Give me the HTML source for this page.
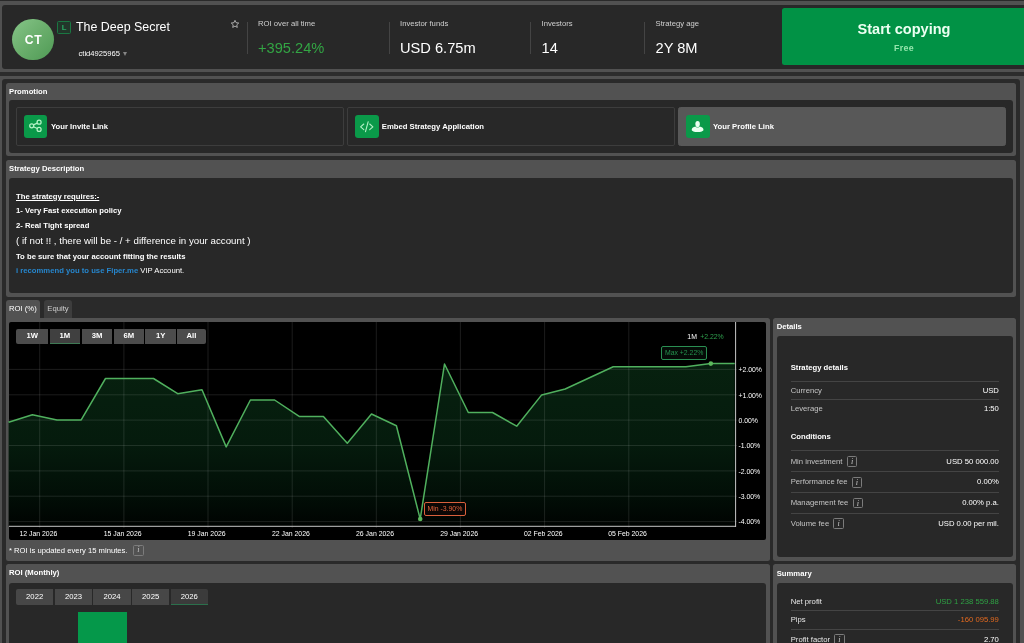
<!DOCTYPE html>
<html lang="en">
<head>
<meta charset="utf-8">
<title>The Deep Secret</title>
<style>
*{box-sizing:border-box;margin:0;padding:0}
html,body{width:1024px;height:643px;overflow:hidden}
body{background:#515151;font-family:"Liberation Sans",Arial,sans-serif;color:#fff;font-size:7.68px;position:relative}
#root{position:absolute;left:0;top:0;width:1024px;height:643px;overflow:hidden;will-change:transform}
.abs{position:absolute}
.topstrip{left:0;top:0;width:1024px;height:1.2px;background:#2a2a2a}
.hdr{left:2.3px;top:5px;width:1030px;height:63.6px;background:#282828;border-radius:3px}
.band{left:0;top:71.7px;width:1024px;height:3.9px;background:#2c2c2c}
.wrap{left:2.3px;top:79px;width:1017.9px;height:600px;background:#2a2a2a;border-radius:3px}
.panel{background:#525252;border-radius:2.5px}
.pbody{background:#282828;border-radius:3px}
.ptitle{font-weight:bold;font-size:7.7px;line-height:10px;white-space:nowrap}
.t{white-space:nowrap;line-height:1}
.sep{height:1px;background:#444}
.card{border:1px solid #3d3d3d;border-radius:2px;height:38.5px;top:107.2px}
.ico{width:23.7px;height:23.8px;border-radius:3px;background:#0a9949;top:114.5px}
.ctext{font-weight:bold;font-size:7.7px;top:122.3px;line-height:9px;white-space:nowrap}
.pbtn{top:329px;height:14.7px;background:#4c4c4c;font-weight:bold;font-size:7.7px;text-align:center;line-height:14.7px}
.ybtn{top:589.4px;height:15.6px;background:#474747;font-size:7.7px;text-align:center;line-height:15.6px}
.lbl{color:#c4c4c4;font-size:7.7px;line-height:10px;white-space:nowrap}
.val{color:#fff;font-size:7.7px;line-height:10px;white-space:nowrap;text-align:right;right:25.1px}
.inf{width:10.6px;height:10.7px;border:1px solid #7c7c7c;border-radius:1.5px;color:#c4c4c4;font-size:8.4px;font-style:italic;text-align:center;line-height:9px;font-family:"Liberation Serif",serif}
svg.chart{position:absolute;left:0;top:0}
svg .ax{font-family:"Liberation Sans",Arial,sans-serif;font-size:6.9px;fill:#fff}
</style>
</head>
<body>
<div id="root">
<div class="abs topstrip"></div>

<!-- header -->
<div class="abs hdr"></div>
<div class="abs" style="left:12.3px;top:18.5px;width:41.8px;height:41.9px;border-radius:50%;background:linear-gradient(135deg,#86c588 0%,#6aae6c 50%,#4f9a55 100%)"></div>
<div class="abs t" style="left:12.7px;top:33.6px;width:41.8px;text-align:center;font-weight:bold;font-size:12.2px;letter-spacing:.7px;line-height:13px">CT</div>
<div class="abs" style="left:57.4px;top:20.6px;width:13.6px;height:13.6px;border:1px solid #1a7742;border-radius:1.5px;background:rgba(20,95,52,.26);color:#2aaa63;font-size:7.8px;font-weight:bold;text-align:center;line-height:11.4px">L</div>
<div class="abs t" style="left:76px;top:19.9px;font-size:12.43px;line-height:15px">The Deep Secret</div>
<div class="abs t" style="left:78.5px;top:49.2px;font-size:7.6px;line-height:9px">ctid4925965</div>
<div class="abs" style="left:123.3px;top:51.6px;width:0;height:0;border-left:2.4px solid transparent;border-right:2.4px solid transparent;border-top:4.8px solid #858585"></div>
<svg class="abs" style="left:229.5px;top:19.3px" width="10" height="10" viewBox="0 0 24 24"><path d="M12 3.2l2.7 5.7 6.2.8-4.6 4.3 1.2 6.2-5.5-3.1-5.5 3.1 1.2-6.2L3.100 9.700l6.200-.8z" fill="none" stroke="#e8e8e8" stroke-width="1.6" stroke-linejoin="round"/></svg>

<div class="abs" style="left:247px;top:22px;width:1px;height:32px;background:#444"></div>
<div class="abs t" style="left:258px;top:18.7px;font-size:7.7px;line-height:9px;color:#d0d0d0">ROI over all time</div>
<div class="abs t" style="left:258px;top:40.4px;font-size:14.65px;line-height:17px;color:#33a544">+395.24%</div>

<div class="abs" style="left:389px;top:22px;width:1px;height:32px;background:#444"></div>
<div class="abs t" style="left:400px;top:18.7px;font-size:7.7px;line-height:9px;color:#d0d0d0">Investor funds</div>
<div class="abs t" style="left:400px;top:40.4px;font-size:14.65px;line-height:17px">USD 6.75m</div>

<div class="abs" style="left:530px;top:22px;width:1px;height:32px;background:#444"></div>
<div class="abs t" style="left:541.5px;top:18.7px;font-size:7.7px;line-height:9px;color:#d0d0d0">Investors</div>
<div class="abs t" style="left:541.5px;top:40.4px;font-size:14.65px;line-height:17px">14</div>

<div class="abs" style="left:644px;top:22px;width:1px;height:32px;background:#444"></div>
<div class="abs t" style="left:655.5px;top:18.7px;font-size:7.7px;line-height:9px;color:#d0d0d0">Strategy age</div>
<div class="abs t" style="left:655.5px;top:40.4px;font-size:14.65px;line-height:17px">2Y 8M</div>

<div class="abs" style="left:782px;top:8px;width:244px;height:57.3px;background:#019245;border-radius:2.5px"></div>
<div class="abs t" style="left:782px;top:20.5px;width:244px;text-align:center;font-weight:bold;font-size:14.55px;line-height:16px;color:#ecfff2">Start copying</div>
<div class="abs t" style="left:782px;top:43.3px;width:244px;text-align:center;font-weight:bold;font-size:8.8px;line-height:10px;color:#95e6ad;letter-spacing:.35px">Free</div>

<div class="abs band"></div>
<div class="abs wrap"></div>

<!-- Promotion -->
<div class="abs panel" style="left:6px;top:82.7px;width:1010.4px;height:73.3px"></div>
<div class="abs ptitle" style="left:9px;top:86.7px">Promotion</div>
<div class="abs pbody" style="left:9px;top:100.2px;width:1003.5px;height:52.4px"></div>
<div class="abs card" style="left:16px;width:327.6px"></div>
<div class="abs card" style="left:347.4px;width:327.4px"></div>
<div class="abs card" style="left:678.4px;width:327.2px;background:#585858;border-color:#585858;border-radius:2.5px"></div>
<div class="abs ico" style="left:23.8px"></div>
<svg class="abs" style="left:23.9px;top:114.2px" width="23.6" height="23.6" viewBox="0 0 23.6 23.6"><g fill="none" stroke="#b4f2c6" stroke-width="1.25"><circle cx="7.7" cy="11.8" r="2"/><circle cx="15.1" cy="8.2" r="2"/><circle cx="15.1" cy="15.4" r="2"/><path d="M9.500 10.900l3.800-1.800M9.500 12.700l3.800 1.800"/></g></svg>
<div class="abs ctext" style="left:51px">Your Invite Link</div>
<div class="abs ico" style="left:355px"></div>
<svg class="abs" style="left:355px;top:114.6px" width="23.6" height="23.6" viewBox="0 0 23.600 23.6"><g fill="none" stroke="#b4f2c6" stroke-width="1.1" stroke-linecap="round" stroke-linejoin="round"><path d="M8.800 9L5.600 11.800 8.800 14.600M14.700 9l3.200 2.800-3.200 2.800M13.200 6.700L10.500 16.700"/></g></svg>
<div class="abs ctext" style="left:381.800px">Embed Strategy Application</div>
<div class="abs ico" style="left:686px"></div>
<svg class="abs" style="left:686px;top:114.6px" width="23.6" height="23.6" viewBox="0 0 23.600 23.6"><g fill="#eafff0"><ellipse cx="11.600" cy="9.100" rx="2.250" ry="3.100"/><path d="M5.700 14.700c0-1.900 1.900-3 3.700-3.300.600.800 1.300 1.100 2.200 1.100s1.600-.3 2.200-1.100c1.800.3 3.700 1.400 3.700 3.300 0 1.400-2.600 2.400-5.900 2.400s-5.900-1-5.900-2.400z"/></g></svg>
<div class="abs ctext" style="left:713px">Your Profile Link</div>

<!-- Strategy Description -->
<div class="abs panel" style="left:6px;top:160px;width:1010.4px;height:136.600px"></div>
<div class="abs ptitle" style="left:9px;top:163.500px">Strategy Description</div>
<div class="abs pbody" style="left:9px;top:178.300px;width:1003.5px;height:114.500px"></div>
<div class="abs t" style="left:16px;top:192px;font-weight:bold;font-size:7.7px;line-height:9px;text-decoration:underline">The strategy requires:-</div>
<div class="abs t" style="left:16px;top:206.400px;font-weight:bold;font-size:7.7px;line-height:9px">1- Very Fast execution policy</div>
<div class="abs t" style="left:16px;top:220.800px;font-weight:bold;font-size:7.7px;line-height:9px">2- Real Tight spread</div>
<div class="abs t" style="left:16px;top:235.200px;font-size:9.72px;line-height:11px">( if not !! , there will be - / + difference in your account )</div>
<div class="abs t" style="left:16px;top:252px;font-weight:bold;font-size:7.7px;line-height:9px">To be sure that your account fitting the results</div>
<div class="abs t" style="left:16px;top:266px;font-size:7.7px;line-height:9px"><b style="color:#2686cd">i recommend you to use Fiper.me</b> VIP Account.</div>

<!-- Tabs -->
<div class="abs" style="left:6px;top:300.200px;width:34px;height:20px;background:#525252;border-radius:3px 3px 0 0"></div>
<div class="abs t" style="left:9px;top:304.300px;font-size:7.7px;line-height:9px">ROI (%)</div>
<div class="abs" style="left:43.800px;top:300.200px;width:28px;height:17.600px;background:#3d3d3d;border-radius:3px 3px 0 0"></div>
<div class="abs t" style="left:47.300px;top:304.300px;font-size:7.7px;line-height:9px;color:#cfcfcf">Equity</div>

<!-- Chart panel -->
<div class="abs panel" style="left:6px;top:317.800px;width:764px;height:242.900px;border-top-left-radius:0"></div>
<div class="abs" style="left:9px;top:321.900px;width:757px;height:217.700px;background:#000;border-radius:2px"></div>
<svg class="chart" width="1024" height="643" viewBox="0 0 1024 643">
<defs><linearGradient id="g" x1="0" y1="360" x2="0" y2="527" gradientUnits="userSpaceOnUse"><stop offset="0" stop-color="#07210f"/><stop offset=".5" stop-color="#051b0d"/><stop offset=".8" stop-color="#020f07"/><stop offset="1" stop-color="#000301"/></linearGradient></defs>
<polygon points="8.6,422.2 32.4,414.8 57.0,419.9 81.2,419.9 105.5,378.5 153.5,378.5 177.7,393.7 202.0,389.8 226.2,446.9 250.4,400.0 274.6,400.0 299.2,416.4 323.4,416.4 347.3,443.3 371.5,414.0 396.4,425.8 420.2,519.1 444.5,364.0 468.3,412.5 492.5,412.5 516.7,426.2 541.7,394.9 565.2,389.0 613.2,366.8 685.9,366.8 710.9,363.5 734.7,363.5 734.7,526.2 8.6,526.2" fill="url(#g)"/>
<line x1="39.7" y1="322" x2="39.7" y2="528" stroke="#fff" stroke-opacity=".11" stroke-width="1"/>
<line x1="123.9" y1="322" x2="123.9" y2="528" stroke="#fff" stroke-opacity=".11" stroke-width="1"/>
<line x1="208.0" y1="322" x2="208.0" y2="528" stroke="#fff" stroke-opacity=".11" stroke-width="1"/>
<line x1="292.2" y1="322" x2="292.2" y2="528" stroke="#fff" stroke-opacity=".11" stroke-width="1"/>
<line x1="376.3" y1="322" x2="376.3" y2="528" stroke="#fff" stroke-opacity=".11" stroke-width="1"/>
<line x1="460.4" y1="322" x2="460.4" y2="528" stroke="#fff" stroke-opacity=".11" stroke-width="1"/>
<line x1="544.6" y1="322" x2="544.6" y2="528" stroke="#fff" stroke-opacity=".11" stroke-width="1"/>
<line x1="628.8" y1="322" x2="628.8" y2="528" stroke="#fff" stroke-opacity=".11" stroke-width="1"/>
<line x1="9" y1="369.4" x2="737" y2="369.4" stroke="#fff" stroke-opacity=".11" stroke-width="1"/>
<line x1="9" y1="394.8" x2="737" y2="394.8" stroke="#fff" stroke-opacity=".11" stroke-width="1"/>
<line x1="9" y1="420.1" x2="737" y2="420.1" stroke="#fff" stroke-opacity=".11" stroke-width="1"/>
<line x1="9" y1="445.5" x2="737" y2="445.5" stroke="#fff" stroke-opacity=".11" stroke-width="1"/>
<line x1="9" y1="470.9" x2="737" y2="470.9" stroke="#fff" stroke-opacity=".11" stroke-width="1"/>
<line x1="9" y1="496.2" x2="737" y2="496.2" stroke="#fff" stroke-opacity=".11" stroke-width="1"/>
<line x1="9" y1="521.6" x2="737" y2="521.6" stroke="#fff" stroke-opacity=".11" stroke-width="1"/>
<polyline points="8.6,422.2 32.4,414.8 57.0,419.9 81.2,419.9 105.5,378.5 153.5,378.5 177.7,393.7 202.0,389.8 226.2,446.9 250.4,400.0 274.6,400.0 299.2,416.4 323.4,416.4 347.3,443.3 371.5,414.0 396.4,425.8 420.2,519.1 444.5,364.0 468.3,412.5 492.5,412.5 516.7,426.2 541.7,394.9 565.2,389.0 613.2,366.8 685.9,366.8 710.9,363.5 734.7,363.5" fill="none" stroke="#50b05e" stroke-width="1.5" stroke-linejoin="round"/>
<line x1="9" y1="526.3" x2="736" y2="526.3" stroke="#c6c6c6" stroke-width="1"/>
<line x1="735.6" y1="322" x2="735.6" y2="527" stroke="#c6c6c6" stroke-width="1"/>
<circle cx="420.2" cy="519" r="2.3" fill="#5cb85c"/>
<circle cx="710.8" cy="363.6" r="2.3" fill="#5cb85c"/>
<text x="738.4" y="372.2" class="ax">+2.00%</text>
<text x="738.4" y="397.6" class="ax">+1.00%</text>
<text x="738.4" y="422.9" class="ax">0.00%</text>
<text x="738.4" y="448.3" class="ax">-1.00%</text>
<text x="738.4" y="473.7" class="ax">-2.00%</text>
<text x="738.4" y="499.1" class="ax">-3.00%</text>
<text x="738.4" y="524.4" class="ax">-4.00%</text>
<text x="38.4" y="535.9" class="ax" text-anchor="middle">12 Jan 2026</text>
<text x="122.6" y="535.9" class="ax" text-anchor="middle">15 Jan 2026</text>
<text x="206.7" y="535.9" class="ax" text-anchor="middle">19 Jan 2026</text>
<text x="290.9" y="535.9" class="ax" text-anchor="middle">22 Jan 2026</text>
<text x="375.0" y="535.9" class="ax" text-anchor="middle">26 Jan 2026</text>
<text x="459.1" y="535.9" class="ax" text-anchor="middle">29 Jan 2026</text>
<text x="543.3" y="535.9" class="ax" text-anchor="middle">02 Feb 2026</text>
<text x="627.5" y="535.9" class="ax" text-anchor="middle">05 Feb 2026</text>
</svg>
<div class="abs pbtn" style="left:16px;width:32.400px;border-radius:2px 0 0 2px">1W</div>
<div class="abs pbtn" style="left:49.500px;width:30.800px;background:#404040;border-bottom:1px solid #3f7a55">1M</div>
<div class="abs pbtn" style="left:81.600px;width:30.800px">3M</div>
<div class="abs pbtn" style="left:113.600px;width:30.700px">6M</div>
<div class="abs pbtn" style="left:145.300px;width:30.700px">1Y</div>
<div class="abs pbtn" style="left:177.100px;width:28.600px;border-radius:0 2px 2px 0">All</div>
<div class="abs t" style="left:687.300px;top:332.700px;font-size:6.9px;line-height:8px">1M</div>
<div class="abs t" style="left:700.200px;top:332.700px;font-size:6.9px;line-height:8px;color:#2fa04e">+2.22%</div>
<div class="abs t" style="left:661.300px;top:346.400px;width:45.700px;height:13.500px;border:1px solid #2a8f52;border-radius:2px;background:#050b07;color:#25934f;font-size:6.9px;line-height:11.500px;text-align:center">Max +2.22%</div>
<div class="abs t" style="left:424.100px;top:502.300px;width:41.600px;height:13.500px;border:1px solid #d9603c;border-radius:2px;background:#0b0705;color:#e0633c;font-size:6.9px;line-height:11.500px;text-align:center">Min -3.90%</div>
<div class="abs t" style="left:9px;top:545.900px;font-size:7.65px;line-height:9px">* ROI is updated every 15 minutes.</div>
<div class="abs inf" style="left:132.800px;top:544.900px;width:11px;height:11px;line-height:8.8px">i</div>

<!-- Details -->
<div class="abs panel" style="left:773.200px;top:317.700px;width:242.900px;height:243px"></div>
<div class="abs ptitle" style="left:776.700px;top:321.600px">Details</div>
<div class="abs pbody" style="left:776.700px;top:335.700px;width:236.200px;height:221.400px"></div>
<div class="abs ptitle" style="left:790.700px;top:363.400px">Strategy details</div>
<div class="abs sep" style="left:790.700px;top:381.100px;width:208.200px"></div>
<div class="abs lbl" style="left:790.700px;top:386.050px">Currency</div><div class="abs val" style="top:386.050px">USD</div>
<div class="abs sep" style="left:790.700px;top:399.200px;width:208.200px"></div>
<div class="abs lbl" style="left:790.700px;top:404px">Leverage</div><div class="abs val" style="top:404px">1:50</div>
<div class="abs ptitle" style="left:790.700px;top:431.700px">Conditions</div>
<div class="abs sep" style="left:790.700px;top:449.800px;width:208.200px"></div>
<div class="abs lbl" style="left:790.700px;top:456.800px">Min investment</div><div class="abs val" style="top:456.800px">USD 50 000.00</div>
<div class="abs inf" style="left:846.900px;top:456px">i</div>
<div class="abs sep" style="left:790.700px;top:470.800px;width:208.200px"></div>
<div class="abs lbl" style="left:790.700px;top:477.400px">Performance fee</div><div class="abs val" style="top:477.400px">0.00%</div>
<div class="abs inf" style="left:851.500px;top:476.900px">i</div>
<div class="abs sep" style="left:790.700px;top:491.800px;width:208.200px"></div>
<div class="abs lbl" style="left:790.700px;top:498px">Management fee</div><div class="abs val" style="top:498px">0.00% p.a.</div>
<div class="abs inf" style="left:852.700px;top:497.700px">i</div>
<div class="abs sep" style="left:790.700px;top:512.900px;width:208.200px"></div>
<div class="abs lbl" style="left:790.700px;top:518.500px">Volume fee</div><div class="abs val" style="top:518.500px">USD 0.00 per mil.</div>
<div class="abs inf" style="left:833.400px;top:518.300px">i</div>

<!-- ROI Monthly -->
<div class="abs panel" style="left:6px;top:564px;width:764px;height:100px"></div>
<div class="abs ptitle" style="left:9px;top:568.300px">ROI (Monthly)</div>
<div class="abs pbody" style="left:9px;top:582.500px;width:757px;height:80px"></div>
<div class="abs ybtn" style="left:15.800px;width:37.700px;border-radius:2px 0 0 2px">2022</div>
<div class="abs ybtn" style="left:54.600px;width:37.700px">2023</div>
<div class="abs ybtn" style="left:93.200px;width:37.700px">2024</div>
<div class="abs ybtn" style="left:131.800px;width:37.700px">2025</div>
<div class="abs ybtn" style="left:170.600px;width:37.300px;background:#3b3b3b;border-bottom:1.3px solid #2b704c;border-radius:0 2px 0 0">2026</div>
<div class="abs" style="left:78.300px;top:611.800px;width:48.700px;height:40px;background:#05984a"></div>

<!-- Summary -->
<div class="abs panel" style="left:773.200px;top:564px;width:242.900px;height:100px"></div>
<div class="abs ptitle" style="left:776.700px;top:568.500px">Summary</div>
<div class="abs pbody" style="left:776.700px;top:582.500px;width:236.200px;height:80px"></div>
<div class="abs lbl" style="left:790.700px;top:597px;color:#e6e6e6">Net profit</div><div class="abs val" style="top:597px;color:#2ea043">USD 1 238 559.88</div>
<div class="abs sep" style="left:790.700px;top:609.800px;width:208.200px"></div>
<div class="abs lbl" style="left:790.700px;top:614.700px;color:#e6e6e6">Pips</div><div class="abs val" style="top:614.700px;color:#e2691f">-160 095.99</div>
<div class="abs sep" style="left:790.700px;top:628.800px;width:208.200px"></div>
<div class="abs lbl" style="left:790.700px;top:635.100px;color:#e6e6e6">Profit factor</div><div class="abs val" style="top:635.100px">2.70</div>
<div class="abs inf" style="left:834.200px;top:633.900px">i</div>
</div>
</body>
</html>
